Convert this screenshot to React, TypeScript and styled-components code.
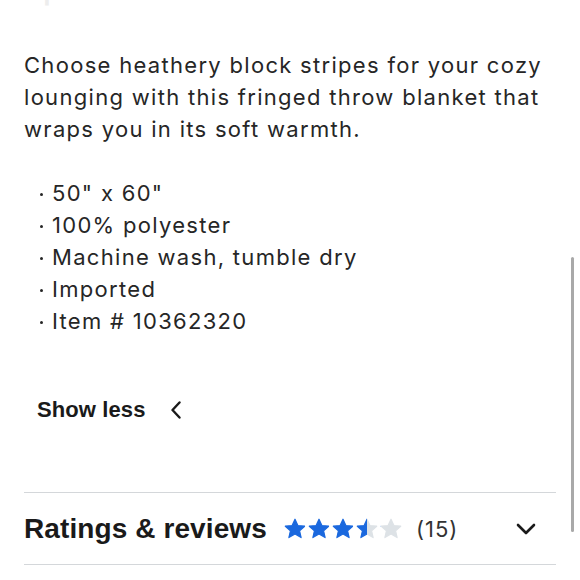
import * as React from 'react';
import styled, { createGlobalStyle } from 'styled-components';

const GlobalStyle = createGlobalStyle`
    body {
        margin: 0;
        background: #ffffff;
        font-family: Inter, "Liberation Sans", sans-serif;
        color: #262626;
    }
`;

const Page = styled.div`
    position: relative;
    width: 580px;
    height: 580px;
    overflow: hidden;
    background: #ffffff;
`;
const Content = styled.div`
    padding: 0 24px;
`;
const FadedHeading = styled.h2`
    margin: -25px 0 0 0;
    font-family: Inter, sans-serif;
    font-size: 28px;
    line-height: 30px;
    font-weight: 600;
    letter-spacing: 1px;
    color: #ededed;
`;
const Description = styled.p`
    margin: 44px 0 0 0;
    font-size: 22px;
    line-height: 32px;
    letter-spacing: 1.3px;
    color: #262626;
`;
const Specs = styled.ul`
    list-style: none;
    margin: 32px 0 0 0;
    padding: 0 0 0 28px;
`;
const Spec = styled.li`
    position: relative;
    font-size: 22px;
    line-height: 32px;
    letter-spacing: 1.3px;
    &::before{
        content: '';
        position: absolute;
        left: -12px;
        top: 16px;
        width: 3px;
        height: 3px;
        border-radius: 50%;
        background: #262626;
    }
`;
const ToggleButton = styled.button`
    display: flex;
    align-items: center;
    gap: 24px;
    height: 32px;
    margin: 57px 0 0 13px;
    padding: 0;
    border: none;
    background: transparent;
    font-family: "Liberation Sans", sans-serif;
    font-size: 22px;
    font-weight: 700;
    letter-spacing: 0.1px;
    color: #1a1a1a;
    cursor: pointer;
`;
const Section = styled.div`
    display: flex;
    align-items: center;
    height: 71px;
    margin-top: 66px;
    border-top: 1.5px solid #d4d7da;
    border-bottom: 1.5px solid #d4d7da;
`;
const SectionTitle = styled.h3`
    margin: 0 16px 0 0;
    font-family: "Liberation Sans", sans-serif;
    font-size: 28px;
    font-weight: 700;
    letter-spacing: 0.1px;
    color: #1a1a1a;
`;
const Stars = styled.div`
    display: flex;
    gap: 0;
`;
const Count = styled.span`
    margin-left: 13px;
    font-size: 22px;
    letter-spacing: 1px;
    color: #333333;
`;
const Expand = styled.span`
    display: flex;
    margin: 0 20px 0 auto;
`;
const ScrollThumb = styled.div`
    position: absolute;
    right: 6px;
    top: 257px;
    width: 3px;
    height: 275px;
    border-radius: 2px;
    background: #a9a9a9;
`;

const STAR = 'M12 2.2l2.9 6.3 6.8.7-5.1 4.6 1.5 6.8L12 17.1l-6.1 3.5 1.5-6.8L2.3 9.2l6.8-.7z';

const Star: React.FunctionComponent<{ fill: number; id: number }> = ({ fill, id }) => (
    <svg width="24" height="24" viewBox="0 0 24 24">
        <defs>
            <linearGradient id={`star-${id}`} x1="0" x2="1" y1="0" y2="0">
                <stop offset={fill} stopColor="#1a68de" />
                <stop offset={fill} stopColor="#dde2e6" />
            </linearGradient>
        </defs>
        <path d={STAR} fill={`url(#star-${id})`} strokeLinejoin="round" stroke={`url(#star-${id})`} strokeWidth="1.2" />
    </svg>
);

const specs = ['50" x 60"', '100% polyester', 'Machine wash, tumble dry', 'Imported', 'Item # 10362320'];

const App: React.FunctionComponent = () => {
    const rating = 3.5;
    return (
        <Page>
            <GlobalStyle />
            <Content>
                <FadedHeading>Specifications</FadedHeading>
                <Description>
                    Choose heathery block stripes for your cozy lounging with this fringed throw blanket that wraps you in its soft warmth.
                </Description>
                <Specs>
                    {specs.map((s) => (
                        <Spec key={s}>{s}</Spec>
                    ))}
                </Specs>
                <ToggleButton>
                    Show less
                    <svg width="12" height="18" viewBox="0 0 12 18" fill="none" stroke="#1a1a1a" strokeWidth="2.4" strokeLinecap="round" strokeLinejoin="round">
                        <path d="M9.5 1.5 L2.5 9 L9.5 16.5" />
                    </svg>
                </ToggleButton>
                <Section>
                    <SectionTitle>Ratings &amp; reviews</SectionTitle>
                    <Stars>
                        {[0, 1, 2, 3, 4].map((i) => (
                            <Star key={i} id={i} fill={Math.max(0, Math.min(1, rating - i))} />
                        ))}
                    </Stars>
                    <Count>(15)</Count>
                    <Expand>
                        <svg width="20" height="12" viewBox="0 0 20 12" fill="none" stroke="#1a1a1a" strokeWidth="2.6" strokeLinecap="round" strokeLinejoin="round">
                            <path d="M2 2 L10 10 L18 2" />
                        </svg>
                    </Expand>
                </Section>
            </Content>
            <ScrollThumb />
        </Page>
    );
};

export default App;
